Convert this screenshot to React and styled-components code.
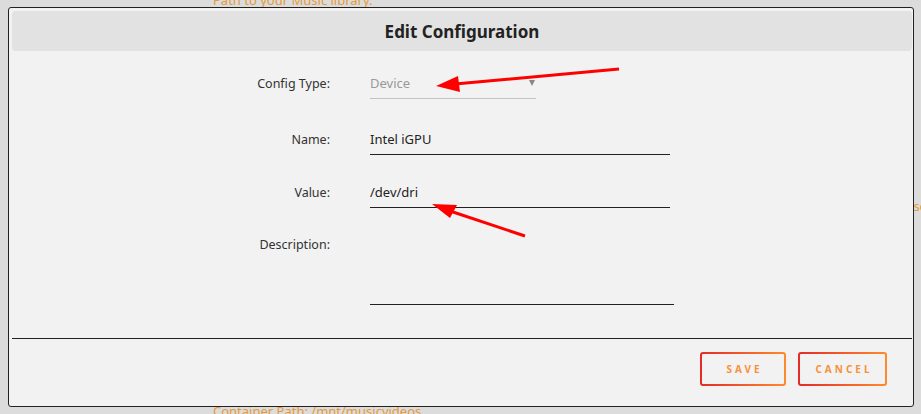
import React from 'react';
import styled, { createGlobalStyle } from 'styled-components';

const GlobalStyle = createGlobalStyle`
    html, body {
        margin: 0;
        padding: 0;
        overflow: hidden;
        background: #dcdcdc;
        font-family: "Noto Sans", "Open Sans", Arial, sans-serif;
    }
`;

const Page = styled.div`
    height: 100vh;
    display: flex;
    flex-direction: column;
    justify-content: space-between;
    padding-left: 213px;
    color: #e39a3a;
    font-size: 13px;
    line-height: 16px;
`;

const PageText = styled.div`
    margin-top: ${props => props.mt || 0}px;
    margin-bottom: ${props => props.mb || 0}px;
    padding-left: ${props => props.indent || 0}px;
    white-space: nowrap;
`;

const Overlay = styled.div`
    position: fixed;
    inset: 0;
`;

const Modal = styled.div`
    position: absolute;
    top: 7px;
    left: 8px;
    width: 906px;
    height: 400px;
    box-sizing: border-box;
    padding: 3px 1px 0 3px;
    background: #f2f2f2;
    border: 1px solid #222;
    border-radius: 3px;
    display: flex;
    flex-direction: column;
`;

const Header = styled.div`
    height: 40px;
    background: #e2e2e2;
    border-radius: 4px;
    display: flex;
    align-items: center;
    justify-content: center;
    font-size: 17px;
    font-weight: 700;
    color: #222;
`;

const Body = styled.div`
    height: 287px;
    padding-top: 18px;
    box-sizing: border-box;
`;

const Row = styled.div`
    display: flex;
    align-items: flex-start;
    gap: 40px;
    margin-top: ${props => props.mt || 0}px;
`;

const Label = styled.div`
    width: 318px;
    text-align: right;
    font-size: 12.5px;
    color: #333;
    line-height: ${props => props.lh || 29}px;
`;

const Field = styled.div`
    position: relative;
    width: ${props => props.w}px;
    height: ${props => props.h || 29}px;
    border-bottom: 1px solid ${props => (props.muted ? '#c4c4c4' : '#222')};
    font-size: 13px;
    line-height: 29px;
    color: ${props => (props.muted ? '#999' : '#222')};
`;

const Caret = styled.span`
    position: absolute;
    right: 1px;
    top: 11px;
    width: 0;
    height: 0;
    border-left: 3.5px solid transparent;
    border-right: 3.5px solid transparent;
    border-top: 6px solid #888;
`;

const Footer = styled.div`
    flex: 1;
    border-top: 1px solid #222;
    display: flex;
    justify-content: flex-end;
    align-items: flex-start;
    gap: 12px;
    padding: 13px 25px 0 0;
`;

const Button = styled.button`
    height: 34px;
    width: ${props => props.w}px;
    border: 2px solid transparent;
    border-radius: 3px;
    background: linear-gradient(#f2f2f2, #f2f2f2) padding-box,
        linear-gradient(to right, #e42a28, #ff8a2c) border-box;
    color: #f7913a;
    font-family: "Noto Sans", "Open Sans", Arial, sans-serif;
    font-size: 10px;
    font-weight: 700;
    letter-spacing: 3px;
    padding: 0 0 0 3px;
    cursor: pointer;
`;

const Annotations = styled.svg`
    position: absolute;
    inset: 0;
    pointer-events: none;
`;

export default function App() {
    return (
        <>
            <GlobalStyle />
            <Page>
                <PageText mt={-8}>Path to your Music library.</PageText>
                <PageText indent={669}>Browse</PageText>
                <PageText mb={-5}>Container Path: /mnt/musicvideos</PageText>
            </Page>
            <Overlay>
                <Modal>
                    <Header>Edit Configuration</Header>
                    <Body>
                        <Row>
                            <Label>Config Type:</Label>
                            <Field w={166} muted>
                                Device
                                <Caret />
                            </Field>
                        </Row>
                        <Row mt={26}>
                            <Label>Name:</Label>
                            <Field w={300}>Intel iGPU</Field>
                        </Row>
                        <Row mt={23}>
                            <Label>Value:</Label>
                            <Field w={300}>/dev/dri</Field>
                        </Row>
                        <Row mt={24}>
                            <Label lh={26}>Description:</Label>
                            <Field w={304} h={72} />
                        </Row>
                    </Body>
                    <Footer>
                        <Button w={86}>SAVE</Button>
                        <Button w={89}>CANCEL</Button>
                    </Footer>
                </Modal>
                <Annotations width="921" height="414">
                    <line x1="619" y1="69" x2="455" y2="84" stroke="#ff0000" strokeWidth="3" />
                    <polygon points="436,86 458,76 460,92" fill="#ff0000" />
                    <line x1="525" y1="236" x2="450" y2="211" stroke="#ff0000" strokeWidth="3" />
                    <polygon points="432,204 457,205 450,218" fill="#ff0000" />
                </Annotations>
            </Overlay>
        </>
    );
}
